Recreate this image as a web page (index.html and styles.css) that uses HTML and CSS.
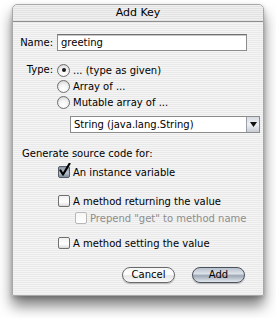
FILE: index.html
```html
<!DOCTYPE html>
<html>
<head>
<meta charset="utf-8">
<link rel="stylesheet" href="styles.css">
</head>
<body>
<div class="window">
  <div class="titlebar">Add Key</div>
  <div class="content">
    <div class="row name-row">
      <span class="label">Name:</span>
      <div class="field">greeting</div>
    </div>
    <div class="row type-row">
      <span class="label type-label">Type:</span>
      <div class="radios">
        <div class="opt"><span class="radio on"></span><span>... (type as given)</span></div>
        <div class="opt"><span class="radio"></span><span>Array of ...</span></div>
        <div class="opt"><span class="radio"></span><span>Mutable array of ...</span></div>
      </div>
    </div>
    <div class="popup">
      <span class="popup-text">String (java.lang.String)</span>
      <span class="popup-btn"><svg width="7" height="5" viewBox="0 0 7 5"><path d="M0 0h7L3.5 5z" fill="#111"/></svg></span>
    </div>
    <div class="section">Generate source code for:</div>
    <div class="check c1"><span class="box on"><svg width="13" height="14" viewBox="0 0 13 14"><path d="M2.5 7.5 L5 11.5 L11.5 0.8" fill="none" stroke="#000" stroke-width="2.2" stroke-linecap="round" stroke-linejoin="round"/></svg></span><span>An instance variable</span></div>
    <div class="check c2"><span class="box"></span><span>A method returning the value</span></div>
    <div class="check c3 disabled"><span class="box"></span><span>Prepend "get" to method name</span></div>
    <div class="check c4"><span class="box"></span><span>A method setting the value</span></div>
    <div class="buttons">
      <div class="btn cancel">Cancel</div>
      <div class="btn default">Add</div>
    </div>
  </div>
</div>
</body>
</html>
```

FILE: styles.css
```css
html, body {
  margin: 0;
  padding: 0;
  background: #ffffff;
}
body {
  font-family: "DejaVu Sans", sans-serif;
  font-size: 10px;
  color: #000;
  width: 276px;
  height: 318px;
  overflow: hidden;
}
.window {
  margin: 4px 0 0 12px;
  width: 250px;
  height: 290px;
  border: 1px solid #a8a8a8;
  border-radius: 5px 5px 0 0;
  background: repeating-linear-gradient(to bottom, #f5f5f5 0, #f5f5f5 1px, #e9e9e9 1px, #e9e9e9 2px);
  box-shadow: 0 10px 14px rgba(0,0,0,0.5), 0 2px 4px rgba(0,0,0,0.2);
}
.titlebar {
  height: 16px;
  line-height: 16px;
  text-align: center;
  border-bottom: 1px solid #8e8e8e;
  border-radius: 5px 5px 0 0;
  background: repeating-linear-gradient(to bottom, #f0f0f0 0, #f0f0f0 1px, #e2e2e2 1px, #e2e2e2 2px);
  font-size: 11px;
}
.content {
  display: flex;
  flex-direction: column;
}
.row {
  display: grid;
  grid-template-columns: 40px 190px;
  column-gap: 4px;
}
.label {
  text-align: right;
}
.name-row {
  margin-top: 12px;
  align-items: center;
}
.field {
  height: 15px;
  line-height: 15px;
  border: 1px solid #8c8c8c;
  border-top-color: #6f6f6f;
  background: #fff;
  padding-left: 3px;
  box-shadow: inset 0 1px 0 #c8c8c8;
}
.type-row {
  margin-top: 11px;
}
.type-label {
  line-height: 16px;
}
.radios {
  display: flex;
  flex-direction: column;
}
.opt {
  height: 16px;
  display: flex;
  align-items: center;
  gap: 3px;
}
.radio {
  width: 11px;
  height: 11px;
  border-radius: 50%;
  border: 1px solid #6e6e6e;
  background: radial-gradient(circle at 50% 70%, #ffffff 0, #f4f4f4 45%, #c9c9c9 100%);
  box-sizing: content-box;
  position: relative;
  flex: none;
}
.radio.on::after {
  content: "";
  position: absolute;
  left: 3.5px;
  top: 3.5px;
  width: 4px;
  height: 4px;
  border-radius: 50%;
  background: #1a1a1a;
}
.popup {
  margin: 6px 0 0 57px;
  width: 188px;
  height: 15px;
  border: 1px solid #8c8c8c;
  background: #fff;
  display: flex;
  align-items: center;
  justify-content: space-between;
}
.popup-text {
  padding-left: 3px;
}
.popup-btn {
  width: 12px;
  height: 15px;
  border-left: 1px solid #9aa0a8;
  background: linear-gradient(to bottom, #d8dce2, #eef0f3 50%, #c8ccd3);
  display: flex;
  align-items: center;
  justify-content: center;
}
.section {
  margin: 13px 0 0 9px;
  height: 16px;
  line-height: 16px;
}
.check {
  display: flex;
  align-items: center;
  gap: 3px;
  height: 16px;
  margin-left: 45px;
}
.c1 { margin-top: 2px; }
.c2 { margin-top: 13px; }
.c3 { margin-top: 1px; margin-left: 62px; color: #8d8d8d; }
.c4 { margin-top: 9px; }
.box {
  width: 10px;
  height: 10px;
  border: 1px solid #707070;
  border-radius: 2px;
  background: linear-gradient(to bottom, #f0f0f0, #ffffff 60%, #d8d8d8);
  position: relative;
  flex: none;
}
.box.on {
  background: linear-gradient(to bottom, #8e98a6, #b9c2ce 60%, #7f8a98);
  border-color: #555d68;
}
.box svg {
  position: absolute;
  left: -1px;
  top: -4px;
}
.disabled .box {
  border-color: #b8b8b8;
  background: linear-gradient(to bottom, #f6f6f6, #ffffff);
}
.buttons {
  margin-top: 16px;
  display: flex;
  gap: 17px;
  padding-left: 109px;
}
.btn {
  width: 51px;
  height: 14px;
  line-height: 14px;
  text-align: center;
  border-radius: 8px;
  border: 1px solid #6a6a6a;
  box-shadow: 0 1px 1px rgba(0,0,0,0.25);
}
.cancel {
  background: linear-gradient(to bottom, #f4f4f4, #ffffff 45%, #e6e6e6 55%, #fafafa);
}
.default {
  border-color: #4a525e;
  background: linear-gradient(to bottom, #b7c0cc, #dde2e9 40%, #9ea8b5 55%, #e3e8ee);
}
```
